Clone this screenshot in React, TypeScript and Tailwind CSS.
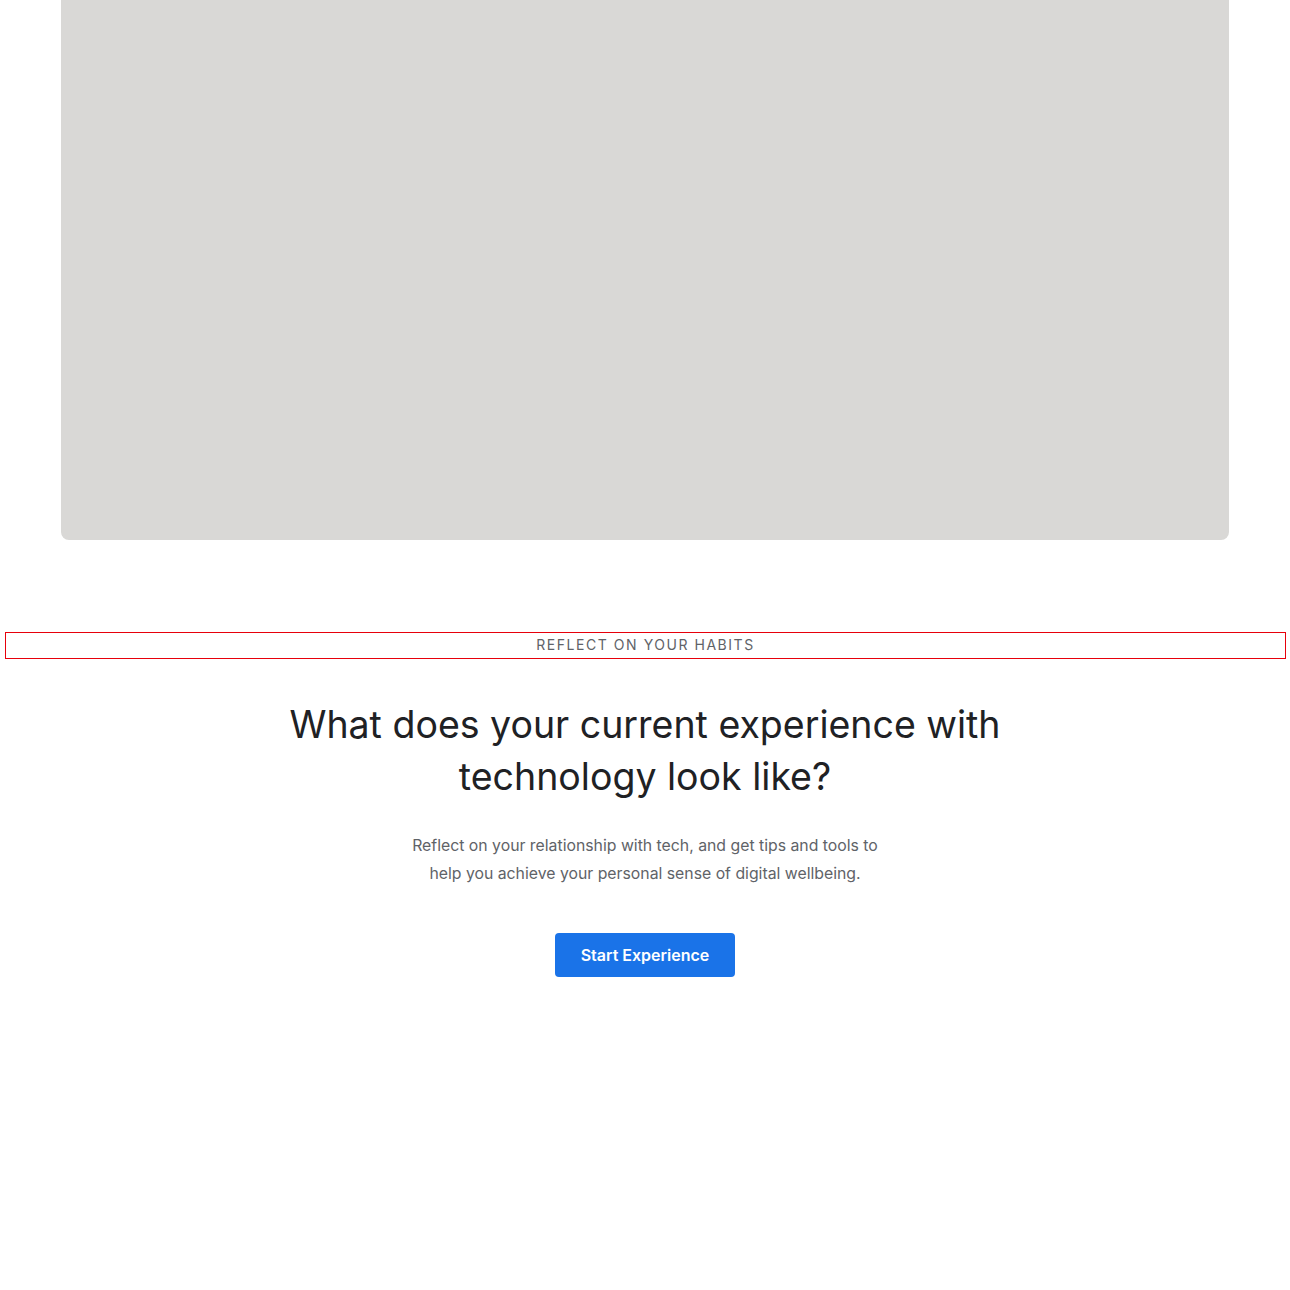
export default function App() {
  return (
    <div className="min-h-screen bg-white">
      <div className="px-[61px]">
        <div className="h-[540px] rounded-b-lg bg-[#d9d8d6]" />
      </div>

      <section className="pt-[92px] pb-24 font-['Inter',sans-serif]">
        <div className="ml-[5px] mr-[4px] border border-red-600 pt-[3px] pb-[5px] text-center text-[14px] leading-[17px] tracking-[0.11em] text-[#5f6368]">
          REFLECT ON YOUR HABITS
        </div>

        <h2 className="mx-auto mt-[40px] max-w-[780px] text-center text-[37.5px] leading-[52px] text-[#202124]">
          What does your current experience with technology look like?
        </h2>

        <p className="mx-auto mt-[29px] max-w-[490px] text-center text-[15.8px] leading-[28px] text-[#5f6368]">
          Reflect on your relationship with tech, and get tips and tools to help you achieve your personal sense of digital wellbeing.
        </p>

        <div className="mt-[45px] flex justify-center">
          <button className="h-[44px] w-[180px] rounded bg-[#1a73e8] text-[16px] font-semibold text-white">
            Start Experience
          </button>
        </div>
      </section>
    </div>
  )
}
